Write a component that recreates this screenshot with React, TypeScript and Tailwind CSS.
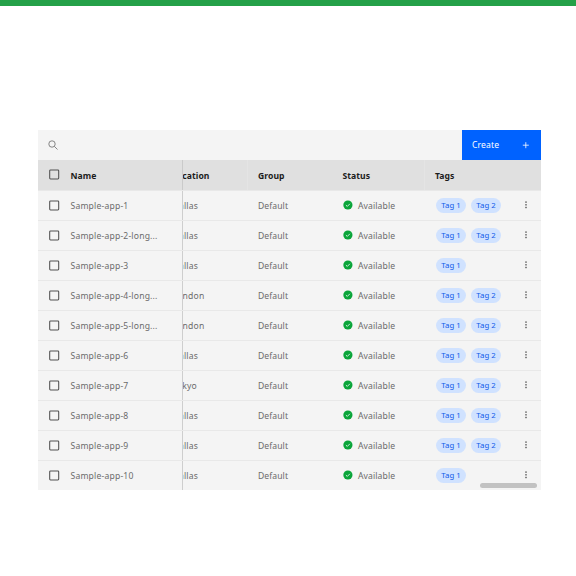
type App = { name: string; location: string; tags: string[] };

const apps: App[] = [
  { name: "Sample-app-1", location: "Dallas", tags: ["Tag 1", "Tag 2"] },
  { name: "Sample-app-2-long...", location: "Dallas", tags: ["Tag 1", "Tag 2"] },
  { name: "Sample-app-3", location: "Dallas", tags: ["Tag 1"] },
  { name: "Sample-app-4-long...", location: "London", tags: ["Tag 1", "Tag 2"] },
  { name: "Sample-app-5-long...", location: "London", tags: ["Tag 1", "Tag 2"] },
  { name: "Sample-app-6", location: "Dallas", tags: ["Tag 1", "Tag 2"] },
  { name: "Sample-app-7", location: "Tokyo", tags: ["Tag 1", "Tag 2"] },
  { name: "Sample-app-8", location: "Dallas", tags: ["Tag 1", "Tag 2"] },
  { name: "Sample-app-9", location: "Dallas", tags: ["Tag 1", "Tag 2"] },
  { name: "Sample-app-10", location: "Dallas", tags: ["Tag 1"] },
];

function Checkbox() {
  return (
    <svg className="mr-[11px] mb-px ml-[11px] size-[11px] shrink-0" viewBox="0 0 11 11" fill="none">
      <rect x="0.7" y="0.9" width="9" height="9" rx="0.8" stroke="#505050" strokeWidth="1.05" />
    </svg>
  );
}

function StatusIcon() {
  return (
    <svg className="mr-[5px] mb-px size-[10px] shrink-0" viewBox="0 0 10 10" fill="none">
      <circle cx="4.9" cy="5" r="4.6" fill="#0aa53a" />
      <path d="M2.9 5.1L4.3 6.4L6.9 3.8" stroke="#fff" strokeWidth="0.8" />
    </svg>
  );
}

function Kebab() {
  return (
    <svg className="mr-[11px] mb-px ml-auto h-[8px] w-[7px] shrink-0" viewBox="0 0 7 8" fill="#555">
      <rect x="2.3" y="0.4" width="1.4" height="1.4" />
      <rect x="2.3" y="3.1" width="1.4" height="1.4" />
      <rect x="2.3" y="5.8" width="1.4" height="1.4" />
    </svg>
  );
}

function HeaderRow() {
  return (
    <div className="flex h-[30px] bg-[#e0e0e0] text-[8.6px] font-bold tracking-[0.06px] text-[#1c1c1c]">
      <div className="flex w-[144.5px] shrink-0 items-center border-r border-[#cacaca]">
        <Checkbox />
        <span className="-ml-[0.5px] pt-[2px]">Name</span>
      </div>
      <div className="flex w-[65.5px] shrink-0 items-center overflow-hidden border-r border-[#e4e4e4]">
        <span className="-ml-[10.5px] pt-[2px]">Location</span>
      </div>
      <div className="flex w-[85px] shrink-0 items-center pt-[2px] pl-[10px]">Group</div>
      <div className="flex w-[92px] shrink-0 items-center border-r border-[#e4e4e4] pt-[2px] pl-[9.5px]">Status</div>
      <div className="flex flex-1 items-center pt-[2px] pl-[10px]">Tags</div>
    </div>
  );
}

function Row({ app }: { app: App }) {
  return (
    <div className="flex h-[30px] border-t border-[#e8e8e8] text-[8.6px] tracking-[0.18px] text-[#6b6b6b]">
      <div className="flex w-[144.5px] shrink-0 items-center border-r border-[#cecece] whitespace-nowrap">
        <Checkbox />
        <span className="-ml-[0.5px] pt-[1px]">{app.name}</span>
      </div>
      <div className="flex w-[65.5px] shrink-0 items-center overflow-hidden">
        <span className="-ml-[10px] pt-[1px]">{app.location}</span>
      </div>
      <div className="flex w-[85px] shrink-0 items-center pt-[1px] pl-[10px] tracking-[0.08px]">Default</div>
      <div className="flex w-[92px] shrink-0 items-center pl-[10px]">
        <StatusIcon />
        <span className="pt-[1px] tracking-[0.1px]">Available</span>
      </div>
      <div className="flex flex-1 items-center pl-[11px]">
        <div className="flex gap-[5px]">
          {app.tags.map((tag) => (
            <span
              key={tag}
              className="flex h-[15px] w-[30px] items-center justify-center rounded-full bg-[#d0e2ff] pt-px text-[7.8px] tracking-[0.02px] whitespace-nowrap text-[#0f5bea]"
            >
              {tag}
            </span>
          ))}
        </div>
        <Kebab />
      </div>
    </div>
  );
}

export default function App() {
  return (
    <div className="h-[576px] w-full overflow-hidden bg-white font-['Noto_Sans','Liberation_Sans',sans-serif]">
      <div className="h-[6px] bg-[#24a148]" />
      <main className="relative mt-[124px] ml-[38px] w-[503px] bg-[#f4f4f4]">
        <div className="flex h-[30px] items-center">
          <svg className="ml-[10px] size-[10px]" viewBox="0 0 10 10" fill="none" stroke="#6a6a6a" strokeWidth="0.8">
            <circle cx="4" cy="4" r="3.2" />
            <path d="M6.4 6.4L9.5 9.5" />
          </svg>
          <button className="ml-auto flex h-full w-[79px] items-center justify-between bg-[#0062ff] pr-[12px] pl-[10px] text-[8.6px] tracking-[0.15px] text-white">
            <span className="pt-px">Create</span>
            <svg className="size-[7px]" viewBox="0 0 7 7" fill="none" stroke="#fff" strokeWidth="0.8">
              <path d="M3.8 0.2V6.2M0.8 3.2H6.8" />
            </svg>
          </button>
        </div>
        <HeaderRow />
        {apps.map((app) => (
          <Row key={app.name} app={app} />
        ))}
        <div className="absolute right-[4px] bottom-[2px] h-[5px] w-[57px] rounded-full bg-[#c2c2c2]" />
      </main>
    </div>
  );
}
